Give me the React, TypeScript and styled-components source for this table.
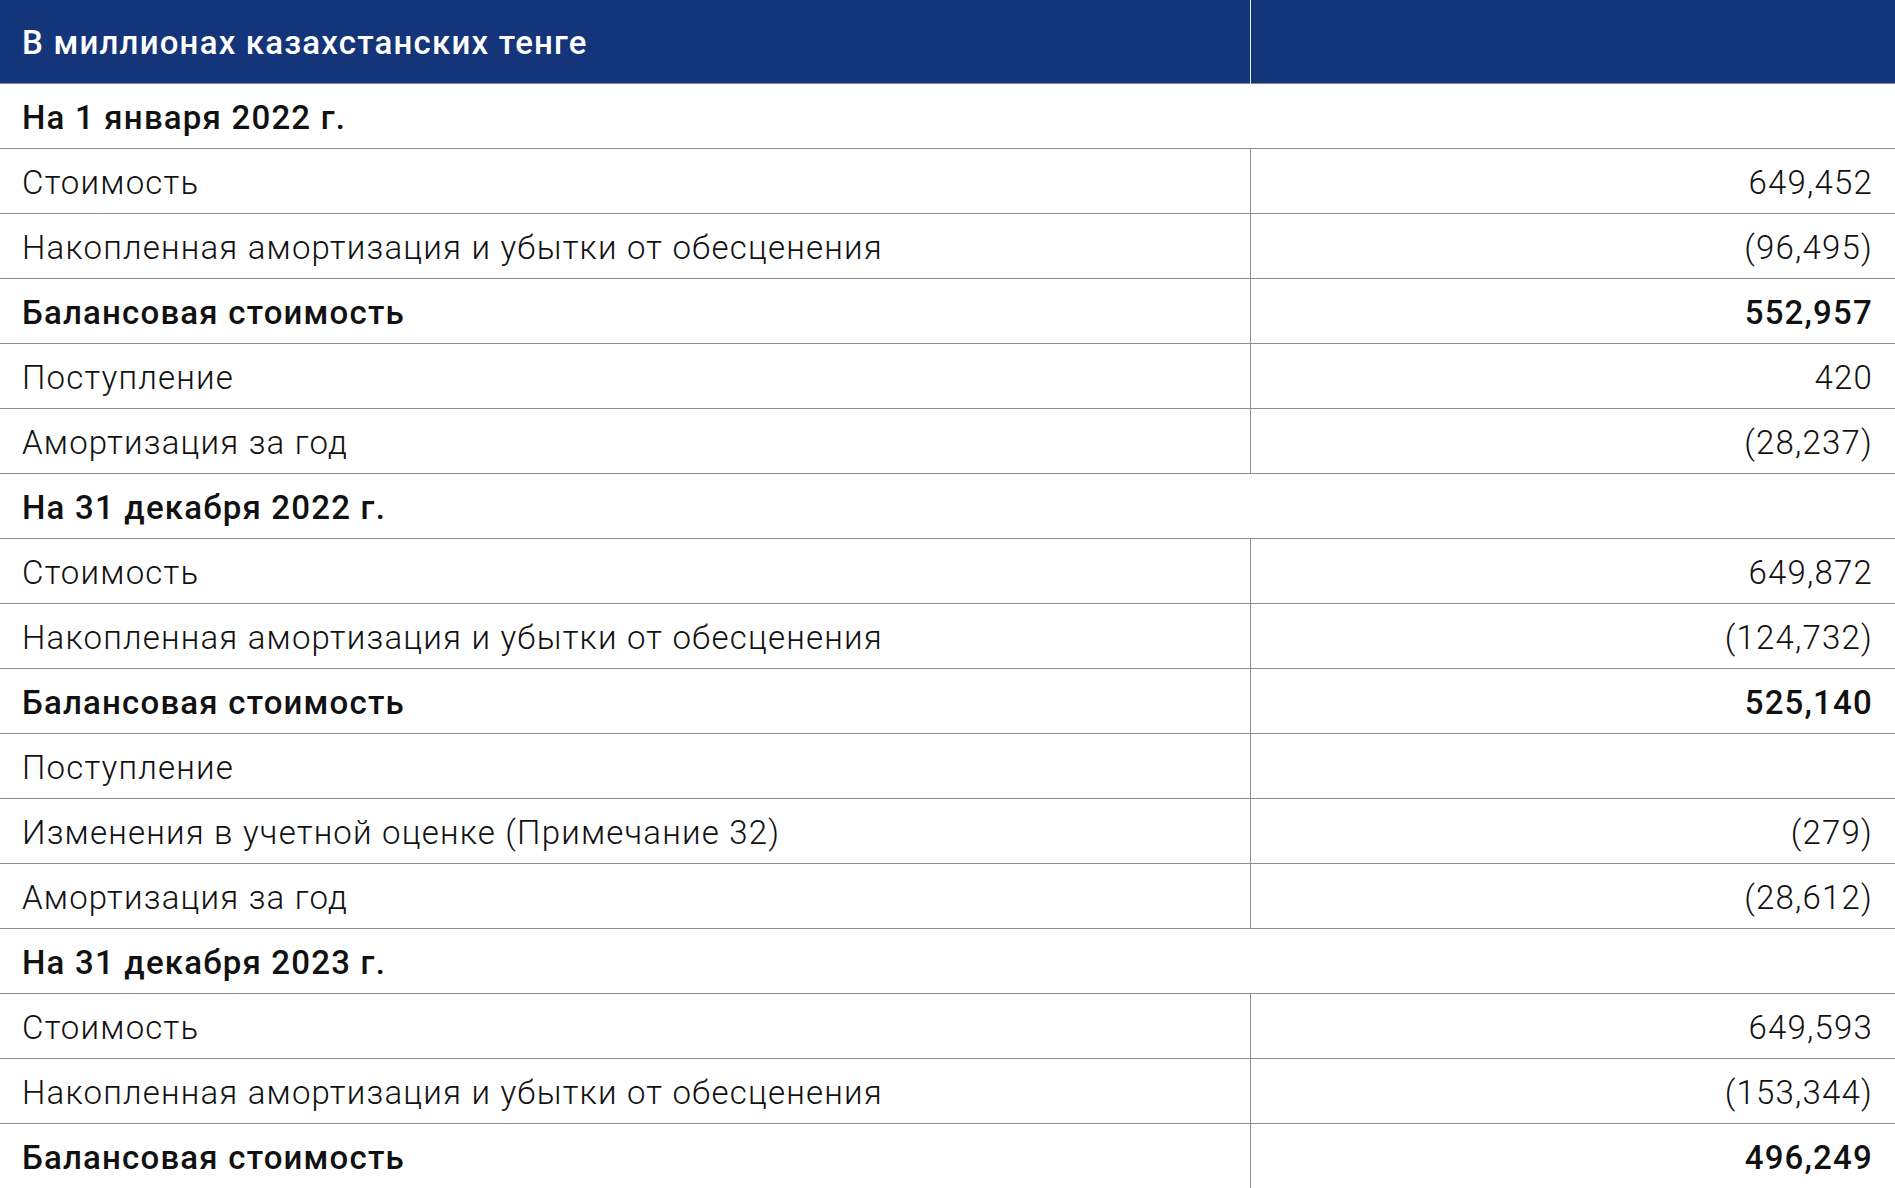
import styled, { createGlobalStyle } from 'styled-components';

const GlobalStyle = createGlobalStyle`
  html, body { margin: 0; padding: 0; background: #fff; }
  body { font-family: Roboto, "Liberation Sans", sans-serif; }
`;

type Row =
  | { kind: 'section'; label: string }
  | { kind: 'item'; label: string; value?: string; bold?: boolean };

const rows: Row[] = [
  { kind: 'section', label: 'На 1 января 2022 г.' },
  { kind: 'item', label: 'Стоимость', value: '649,452' },
  { kind: 'item', label: 'Накопленная амортизация и убытки от обесценения', value: '(96,495)' },
  { kind: 'item', label: 'Балансовая стоимость', value: '552,957', bold: true },
  { kind: 'item', label: 'Поступление', value: '420' },
  { kind: 'item', label: 'Амортизация за год', value: '(28,237)' },
  { kind: 'section', label: 'На 31 декабря 2022 г.' },
  { kind: 'item', label: 'Стоимость', value: '649,872' },
  { kind: 'item', label: 'Накопленная амортизация и убытки от обесценения', value: '(124,732)' },
  { kind: 'item', label: 'Балансовая стоимость', value: '525,140', bold: true },
  { kind: 'item', label: 'Поступление' },
  { kind: 'item', label: 'Изменения в учетной оценке (Примечание 32)', value: '(279)' },
  { kind: 'item', label: 'Амортизация за год', value: '(28,612)' },
  { kind: 'section', label: 'На 31 декабря 2023 г.' },
  { kind: 'item', label: 'Стоимость', value: '649,593' },
  { kind: 'item', label: 'Накопленная амортизация и убытки от обесценения', value: '(153,344)' },
  { kind: 'item', label: 'Балансовая стоимость', value: '496,249', bold: true },
];

const Table = styled.table`
  width: 100%;
  border-collapse: collapse;
  table-layout: fixed;
  font-family: Roboto, "Liberation Sans", sans-serif;
  color: #111;
  font-size: 33px;
  letter-spacing: 1.2px;
`;

const HeadRow = styled.tr`
  background: #15357a;
  height: 83px;
  border-bottom: 1px solid #8a8a8a;
`;

const HeadCell = styled.th<{ $right?: boolean }>`
  padding: 2px 22px 0;
  text-align: left;
  color: #fff;
  font-weight: 500;
  border-left: ${p => (p.$right ? '1px solid #e6e9f0' : 'none')};
`;

const BodyRow = styled.tr`
  height: 65px;
  border-bottom: 1px solid #8e8e8e;
`;

const LabelCell = styled.td<{ $bold?: boolean }>`
  padding: 3px 22px 0;
  font-weight: ${p => (p.$bold ? 500 : 300)};
  white-space: nowrap;
`;

const ValueCell = styled.td<{ $bold?: boolean }>`
  padding: 3px 22px 0 0;
  text-align: right;
  font-weight: ${p => (p.$bold ? 500 : 300)};
  border-left: 1px solid #8e8e8e;
`;

export default function App() {
  return (
    <>
      <GlobalStyle />
      <Table>
        <colgroup>
          <col style={{ width: 1250 }} />
          <col />
        </colgroup>
        <thead>
          <HeadRow>
            <HeadCell>В миллионах казахстанских тенге</HeadCell>
            <HeadCell $right />
          </HeadRow>
        </thead>
        <tbody>
          {rows.map((r, i) =>
            r.kind === 'section' ? (
              <BodyRow key={i}>
                <LabelCell $bold colSpan={2}>{r.label}</LabelCell>
              </BodyRow>
            ) : (
              <BodyRow key={i}>
                <LabelCell $bold={r.bold}>{r.label}</LabelCell>
                <ValueCell $bold={r.bold}>{r.value ?? ''}</ValueCell>
              </BodyRow>
            )
          )}
        </tbody>
      </Table>
    </>
  );
}
